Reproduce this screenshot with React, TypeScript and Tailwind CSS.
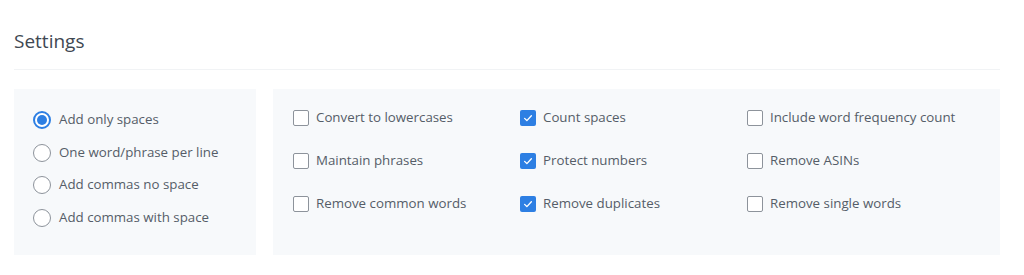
import { useState } from "react";

const radios = ["Add only spaces", "One word/phrase per line", "Add commas no space", "Add commas with space"];

const checks: [string, boolean][] = [
  ["Convert to lowercases", false],
  ["Count spaces", true],
  ["Include word frequency count", false],
  ["Maintain phrases", false],
  ["Protect numbers", true],
  ["Remove ASINs", false],
  ["Remove common words", false],
  ["Remove duplicates", true],
  ["Remove single words", false],
];

const App = () => {
  const [mode, setMode] = useState(0);
  const [opts, setOpts] = useState(checks.map((c) => c[1]));

  const toggle = (i: number) => {
    setOpts(opts.map((v, j) => (j === i ? !v : v)));
  };

  return (
    <div className="w-[1024px] h-[275px] bg-white pl-[14px] pr-[24px] font-['Open_Sans',sans-serif] text-[#555d68]">
      <div className="pt-[27px] pb-[14px] border-b border-[#f1f3f5]">
        <h2 className="text-[19px] leading-[28px] text-[#3f4852]">Settings</h2>
      </div>

      <div className="flex gap-[17px] mt-[19px]">
        <div className="w-[242px] h-[166px] bg-[#f7f9fb] pl-[19px] pt-[15px]">
          {radios.map((r, i) => (
            <label key={r} className="flex items-center h-[32.5px] cursor-pointer" onClick={() => setMode(i)}>
              <span
                className={
                  "w-[18px] h-[18px] rounded-full border flex items-center justify-center mr-[8px] bg-white " +
                  (mode === i ? "border-[#2d7fe3] border-2" : "border-[#8d939b]")
                }
              >
                {mode === i && <span className="w-[10px] h-[10px] rounded-full bg-[#2d7fe3]" />}
              </span>
              <span className="text-[13.3px]">{r}</span>
            </label>
          ))}
        </div>

        <div className="flex-1 h-[166px] bg-[#f7f9fb] pl-[20px] pt-[7px]">
          <div className="grid grid-cols-[227px_227px_227px]">
            {checks.map(([c], i) => (
              <label key={c} className="flex items-center h-[43px] cursor-pointer" onClick={() => toggle(i)}>
                <span
                  className={
                    "w-[16px] h-[16px] rounded-[2px] flex items-center justify-center mr-[7px] " +
                    (opts[i] ? "bg-[#2d7fe3]" : "border border-[#8d939b] bg-white")
                  }
                >
                  {opts[i] && (
                    <svg viewBox="0 0 16 16" className="w-[12px] h-[12px]" fill="none">
                      <path d="M3.5 8.5l3 3 6-6.5" stroke="white" strokeWidth="1.8" strokeLinecap="round" strokeLinejoin="round" />
                    </svg>
                  )}
                </span>
                <span className="text-[13.3px]">{c}</span>
              </label>
            ))}
          </div>
        </div>
      </div>
    </div>
  );
};

export default App;
